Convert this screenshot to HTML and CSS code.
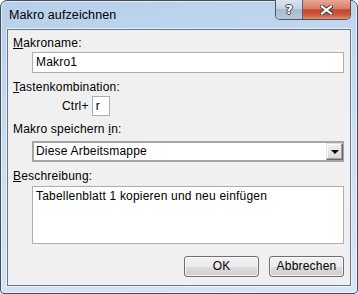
FILE: index.html
```html
<!DOCTYPE html>
<html lang="de">

<head>
    <meta charset="UTF-8">
    <title>Makro aufzeichnen</title>
    <link rel="stylesheet" href="styles.css">
</head>

<body>
    <div class="window">
        <!-- Titelleiste -->
        <div class="titlebar">
            <span class="title">Makro aufzeichnen</span>
            <div class="caption-buttons">
                <div class="cap-btn help"><span class="help-glyph">?</span></div>
                <div class="cap-btn close">
                    <svg width="13" height="10" viewBox="0 0 13 10">
                        <path d="M2 1.5 L11 8.5 M11 1.5 L2 8.5" stroke="#3b3f47" stroke-width="4.2" stroke-linecap="square" fill="none" />
                        <path d="M2 1.5 L11 8.5 M11 1.5 L2 8.5" stroke="#ffffff" stroke-width="2.2" stroke-linecap="square" fill="none" />
                    </svg>
                </div>
            </div>
        </div>
        <!-- Inhalt -->
        <div class="client">
            <div class="label"><u>M</u>akroname:</div>
            <div class="field textbox">Makro1</div>

            <div class="label gap"><u>T</u>astenkombination:</div>
            <div class="shortcut">
                <span>Ctrl+</span>
                <div class="keybox">r</div>
            </div>

            <div class="label gap-small">Makro speichern <u>i</u>n:</div>
            <div class="field combo">
                <span class="combo-text">Diese Arbeitsmappe</span>
                <div class="combo-btn"><span class="arrow"></span></div>
            </div>

            <div class="label gap"><u>B</u>eschreibung:</div>
            <div class="field memo">Tabellenblatt 1 kopieren und neu einfügen</div>

            <div class="buttons">
                <div class="btn">OK</div>
                <div class="btn">Abbrechen</div>
            </div>
        </div>
    </div>
</body>

</html>
```

FILE: styles.css
```css
* {
    margin: 0;
    padding: 0;
    box-sizing: border-box;
}

body {
    font-family: "Liberation Sans", Arial, sans-serif;
    font-size: 12px;
    letter-spacing: 0.2px;
    color: #000;
    background: #fff;
}

.window {
    width: 358px;
    height: 294px;
    border: 1px solid #474d55;
    border-radius: 7px 7px 4px 4px;
    background: linear-gradient(170deg, #b6cfea 0%, #c9ddf2 45%, #d6e6f7 100%);
    box-shadow: inset 0 0 0 1px rgba(255, 255, 255, 0.55);
    padding: 0 6px 7px 6px;
    display: flex;
    flex-direction: column;
}

.titlebar {
    margin-top: -1px;
    height: 29px;
    display: flex;
    align-items: flex-start;
}

.title {
    padding: 8px 0 0 2px;
    line-height: 15px;
    font-size: 12.5px;
    letter-spacing: 0.1px;
}

.caption-buttons {
    margin-left: auto;
    display: flex;
    height: 20px;
    border: 1px solid #4d5560;
    border-top: none;
    border-radius: 0 0 5px 5px;
    overflow: hidden;
}

.cap-btn {
    height: 19px;
    display: flex;
    align-items: center;
    justify-content: center;
}

.help {
    width: 27px;
    border-right: 1px solid #5a6270;
    background: linear-gradient(#d9e4f0 0%, #c3d3e4 45%, #a9bbd0 50%, #b8c9dc 100%);
}

.help-glyph {
    font-family: "DejaVu Sans", sans-serif;
    font-weight: bold;
    font-size: 13px;
    letter-spacing: 0;
    color: #fff;
    text-shadow: 1px 0 0 #3b3f47, -1px 0 0 #3b3f47, 0 1px 0 #3b3f47, 0 -1px 0 #3b3f47;
}

.close {
    width: 47px;
    background: linear-gradient(#e9a898 0%, #dc7c64 45%, #c7432a 52%, #cf5c40 80%, #e08f6f 100%);
}

.client {
    flex: 1;
    border: 1px solid #67778a;
    box-shadow: 0 0 0 1px rgba(255, 255, 255, 0.6);
    background: #f0f0f0;
    padding: 6px 6px 0 5px;
    display: flex;
    flex-direction: column;
}

.label {
    line-height: 15px;
}

.gap {
    margin-top: 7px;
}

.gap-small {
    margin-top: 6px;
}

.field {
    margin-left: 19px;
    background: #fff;
    border: 1px solid #abadb3;
}

.textbox {
    margin-top: 1px;
    height: 21px;
    padding: 2px 3px;
    line-height: 15px;
}

.shortcut {
    display: flex;
    align-items: center;
    padding-left: 49px;
    margin-top: 1px;
}

.keybox {
    width: 18px;
    height: 20px;
    margin-left: 3px;
    background: #fff;
    border: 1px solid #abadb3;
    padding: 2px 3px;
    line-height: 15px;
}

.combo {
    margin-top: 4px;
    height: 21px;
    border: 2px solid #a5a5a5;
    border-right-width: 1px;
    display: flex;
}

.combo-text {
    flex: 1;
    padding: 1px 2px;
    line-height: 15px;
}

.combo-btn {
    width: 17px;
    border: 1px solid #6a6a6a;
    border-top: 1px solid #e0e0e0;
    border-left: 1px solid #e0e0e0;
    box-shadow: inset -1px -1px 0 #a0a0a0, inset 1px 1px 0 #fff;
    background: linear-gradient(#f0f0f0, #d8d8d8);
    display: flex;
    align-items: center;
    justify-content: center;
}

.arrow {
    width: 0;
    height: 0;
    border-left: 4px solid transparent;
    border-right: 4px solid transparent;
    border-top: 4px solid #000;
    margin-top: 1px;
}

.memo {
    margin-top: 2px;
    height: 58px;
    padding: 2px 3px;
    line-height: 15px;
}

.buttons {
    margin-top: 12px;
    display: flex;
    justify-content: flex-end;
    gap: 10px;
}

.btn {
    width: 75px;
    height: 21px;
    border: 1px solid #707070;
    border-radius: 3px;
    background: linear-gradient(#f2f2f2 0%, #ebebeb 50%, #dddddd 51%, #cfcfcf 100%);
    box-shadow: inset 0 0 0 1px rgba(255, 255, 255, 0.7);
    text-align: center;
    line-height: 19px;
}
```
